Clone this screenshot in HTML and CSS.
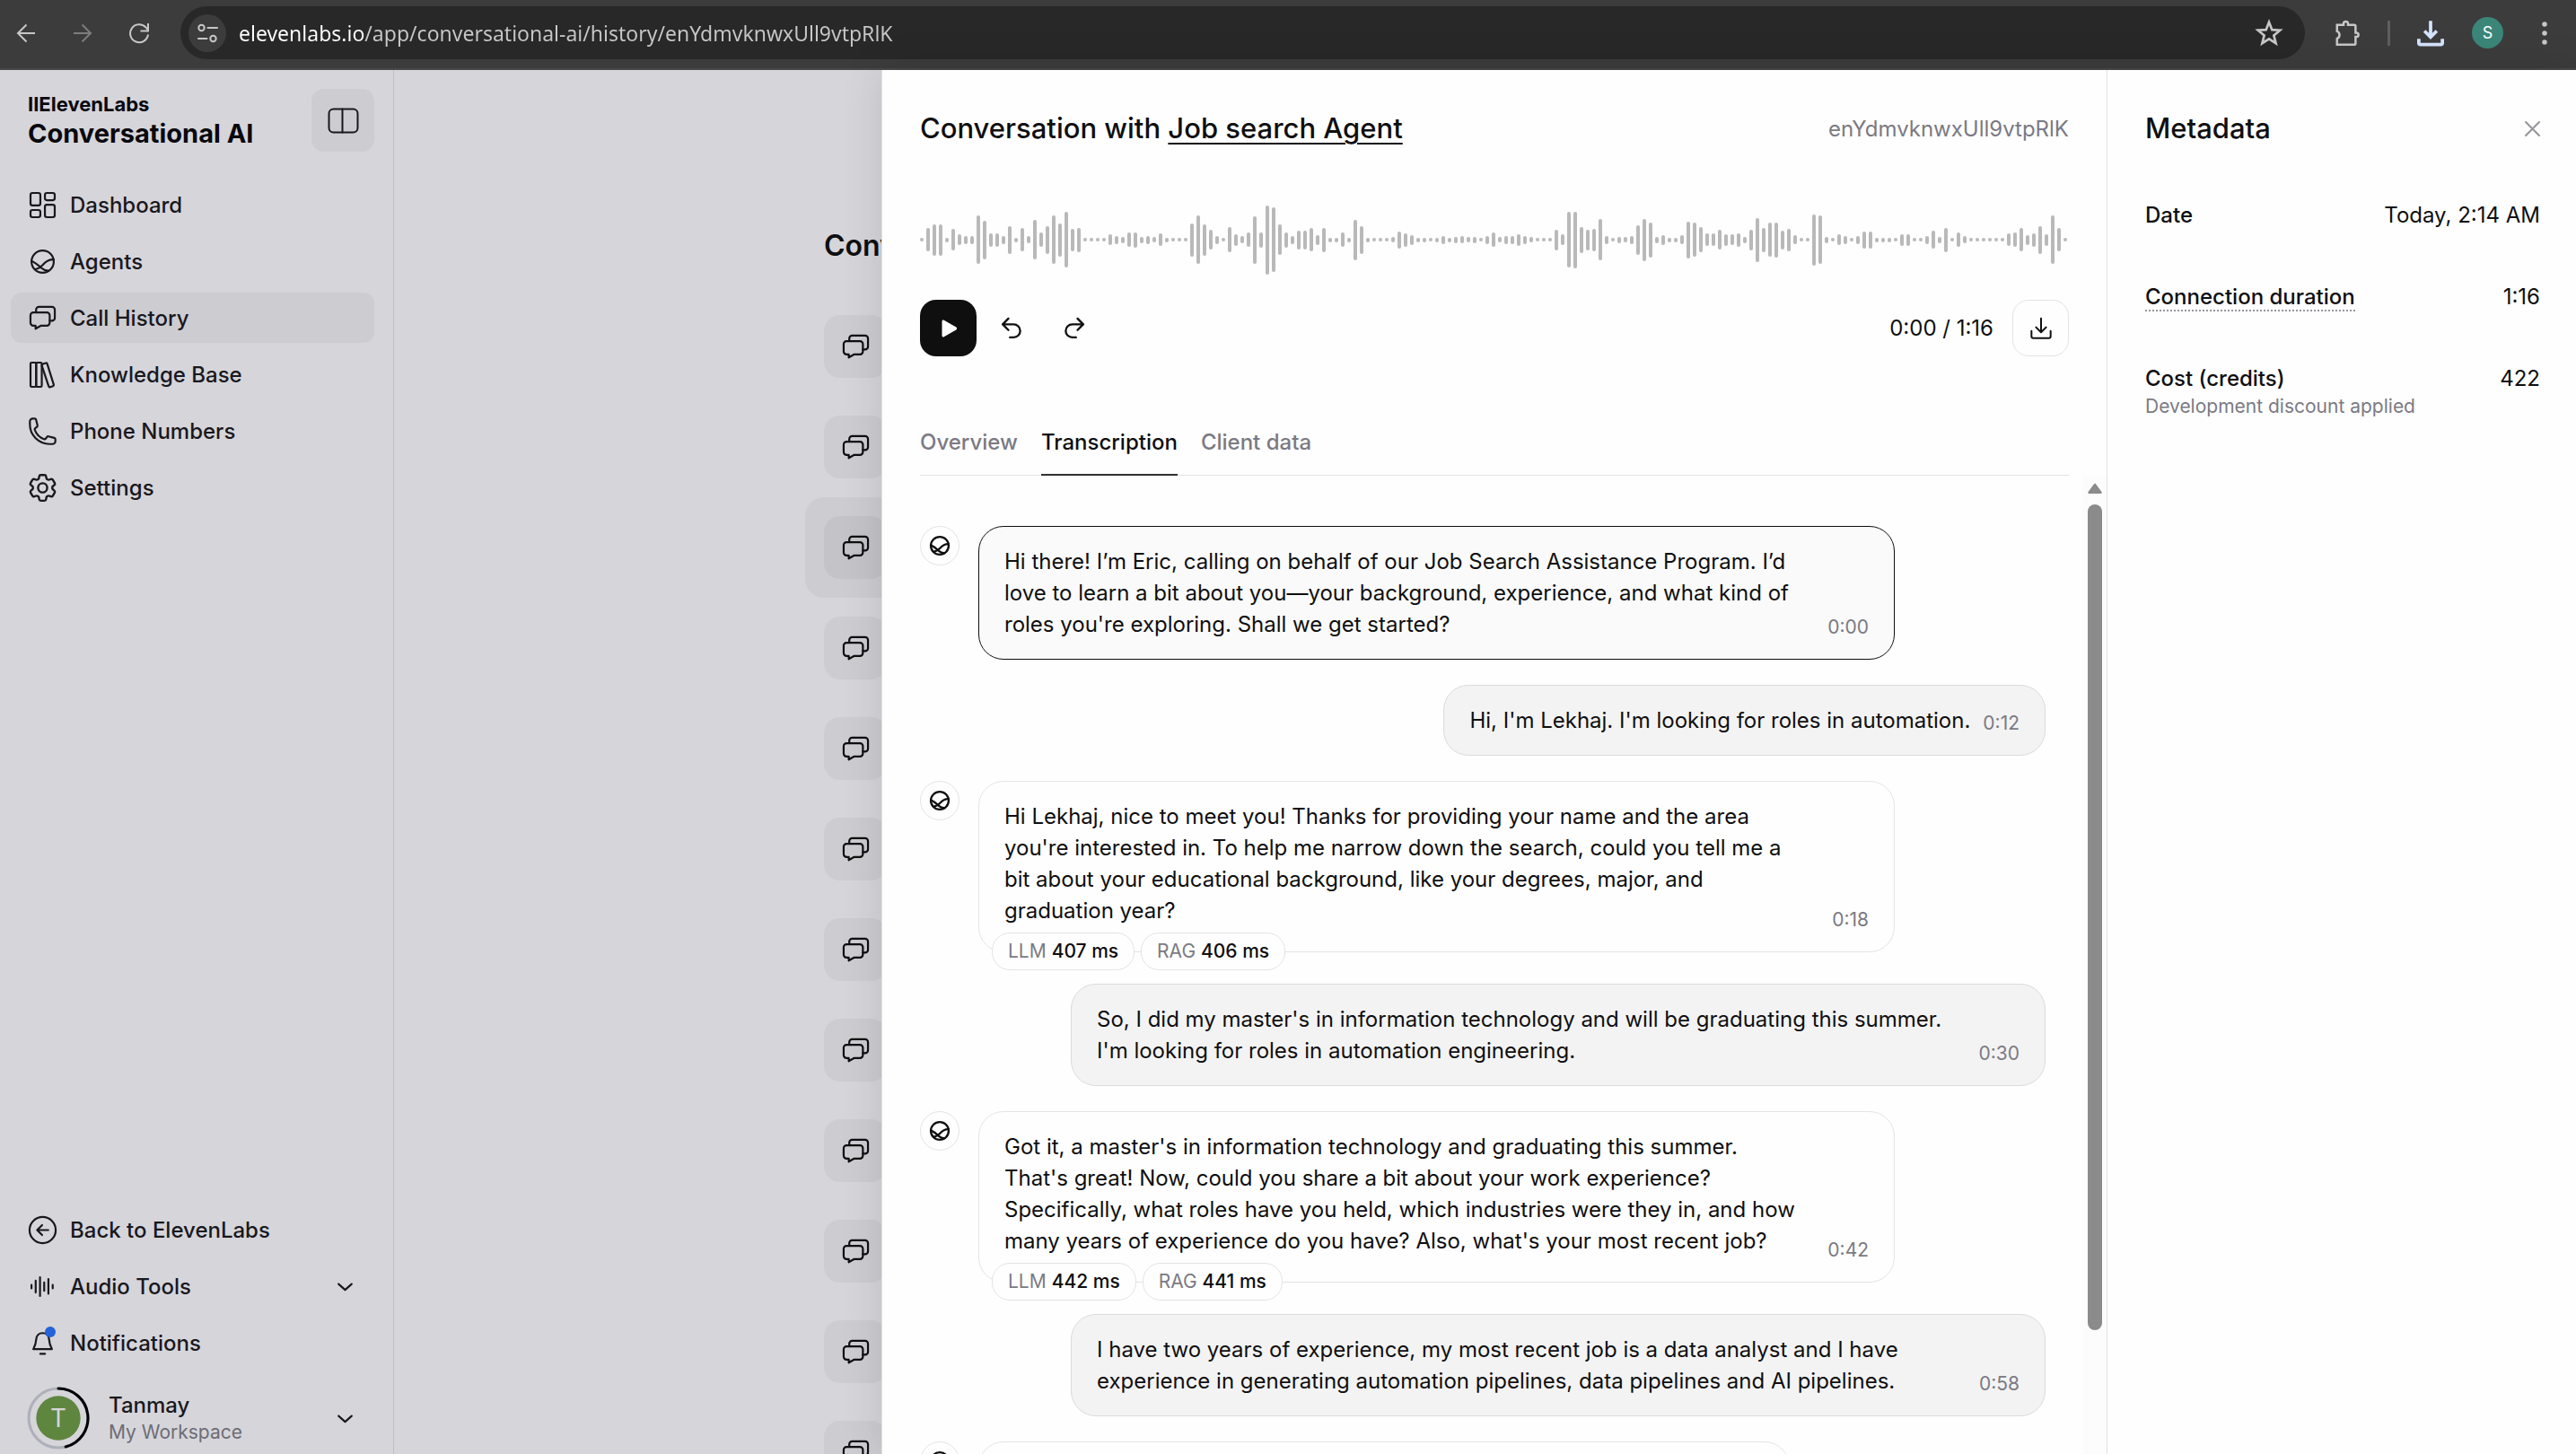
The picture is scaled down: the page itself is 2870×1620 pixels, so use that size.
FILE: index.html
```html
<!DOCTYPE html>
<html lang="en">
<head>
  <meta charset="UTF-8" />
  <meta name="viewport" content="width=device-width, initial-scale=1.0" />
  <title>Conversational AI - Call History</title>
  <link rel="stylesheet" href="styles.css">
</head>
<body>

  <!-- Icon set -->
  <svg class="icon-defs" aria-hidden="true">
    <symbol id="i-dashboard" viewBox="0 0 24 24">
      <rect x="2.75" y="2.75" width="7.5" height="9.5" rx="1.5" />
      <rect x="13.75" y="2.75" width="7.5" height="5.5" rx="1.5" />
      <rect x="2.75" y="15.75" width="7.5" height="5.5" rx="1.5" />
      <rect x="13.75" y="11.75" width="7.5" height="9.5" rx="1.5" />
    </symbol>
    <symbol id="i-agent" viewBox="0 0 24 24">
      <circle cx="12" cy="12" r="8.500" />
      <path d="M3.700 11.700C6 12.600 8.800 14.800 11.200 17c1.600 1.500 3.200 2 5.300 1.900" />
      <path d="M6.500 17.800c2.500-.4 4.300-1.800 6-3.700 2.200-2.500 4.400-3.800 7.900-3.700" />
    </symbol>
    <symbol id="i-chat" viewBox="0 0 24 24">
      <path d="M4.900 7.600h10.300a2.200 2.200 0 0 1 2.200 2.200v5.700a2.200 2.200 0 0 1-2.200 2.200h-4.400l-4.200 2.400v-2.400H4.900a2.200 2.200 0 0 1-2.200-2.200V9.800a2.200 2.200 0 0 1 2.200-2.200Z" />
      <path d="M7 7.600V5.500a2.200 2.200 0 0 1 2.200-2.200h9.900a2.200 2.200 0 0 1 2.200 2.200v6.300a2.200 2.200 0 0 1-2.200 2.200h-1.700" />
    </symbol>
    <symbol id="i-books" viewBox="0 0 24 24">
      <rect x="2.75" y="2.75" width="4.300" height="18.500" rx=".9" />
      <rect x="7.050" y="2.750" width="4.300" height="18.500" rx=".9" />
      <path d="M12 3.900l2.300-.8a.9.9 0 0 1 1.200.6l5 15.900a.9.9 0 0 1-.6 1.100l-2.100.7a.9.9 0 0 1-1.200-.6L11.400 5a.9.900 0 0 1 .6-1.100Z" />
    </symbol>
    <symbol id="i-phone" viewBox="0 0 24 24">
      <path d="M2.250 6.750c0 8.284 6.716 15 15 15h2.250a2.250 2.250 0 0 0 2.250-2.250v-1.372c0-.516-.351-.966-.852-1.091l-4.423-1.106c-.44-.11-.902.055-1.173.417l-.97 1.293c-.282.376-.769.542-1.210.38a12.035 12.035 0 0 1-7.143-7.143c-.162-.441.004-.928.38-1.210l1.293-.97c.363-.271.527-.734.417-1.173L6.963 3.102a1.125 1.125 0 0 0-1.091-.852H4.500A2.250 2.250 0 0 0 2.250 4.500v2.250Z" />
    </symbol>
    <symbol id="i-gear" viewBox="1 1 22 22">
      <path d="M9.594 3.940c.09-.542.56-.94 1.110-.94h2.593c.55 0 1.020.398 1.110.94l.213 1.281c.063.374.313.686.645.87.074.04.147.083.22.127.325.196.72.257 1.075.124l1.217-.456a1.125 1.125 0 0 1 1.370.49l1.296 2.247a1.125 1.125 0 0 1-.26 1.431l-1.003.827c-.293.241-.438.613-.43.992a7.723 7.723 0 0 1 0 .255c-.008.378.137.75.43.991l1.004.827c.424.35.534.955.26 1.430l-1.298 2.247a1.125 1.125 0 0 1-1.369.491l-1.217-.456c-.355-.133-.75-.072-1.076.124a6.470 6.470 0 0 1-.22.128c-.331.183-.581.495-.644.869l-.213 1.281c-.09.543-.56.94-1.110.94h-2.594c-.55 0-1.019-.398-1.110-.94l-.213-1.281c-.062-.374-.312-.686-.644-.87a6.520 6.520 0 0 1-.22-.127c-.325-.196-.72-.257-1.076-.124l-1.217.456a1.125 1.125 0 0 1-1.369-.49l-1.297-2.247a1.125 1.125 0 0 1 .26-1.431l1.004-.827c.292-.24.437-.613.43-.991a6.932 6.932 0 0 1 0-.255c.007-.38-.138-.751-.43-.992l-1.004-.827a1.125 1.125 0 0 1-.26-1.430l1.297-2.247a1.125 1.125 0 0 1 1.370-.491l1.216.456c.356.133.751.072 1.076-.124.072-.044.146-.086.22-.128.332-.183.582-.495.644-.869l.214-1.280Z" />
      <circle cx="12" cy="12" r="3.200" />
    </symbol>
    <symbol id="i-back" viewBox="0 0 24 24">
      <circle cx="12" cy="12" r="10" />
      <path d="M16.300 12H7.800M11.600 8.200L7.800 12l3.800 3.800" />
    </symbol>
    <symbol id="i-audio" viewBox="0 0 24 24">
      <path d="M3.500 10.700v2.600M6.700 7.500v9M10 4.800v14.400M13.200 8.800v6.400M16.400 6.200v11.200M19.700 10.700v2.600" />
    </symbol>
    <symbol id="i-bell" viewBox="0 0 24 24">
      <path d="M12 4.300c-3 0-4.700 2.200-4.900 4.700-.2 3.300-.6 4.600-2.200 7.600h14.200c-1.600-3-2-4.300-2.200-7.600-.2-2.500-1.900-4.700-4.900-4.700ZM10.200 20.200h3.600" />
    </symbol>
    <symbol id="i-chevron" viewBox="0 0 24 24">
      <path d="M7 10l5 4.500 5-4.500" />
    </symbol>
    <symbol id="i-download" viewBox="0 0 24 24">
      <path d="M12 3.500v11.500M7.800 11l4.200 4.200 4.200-4.200M4 14v4.500a1.500 1.500 0 0 0 1.500 1.500h13a1.500 1.500 0 0 0 1.500-1.500V14" />
    </symbol>
  </svg>

  <!-- Browser bar -->
  <header class="browser-bar">
    <button class="bar-btn" aria-label="Back">
      <svg viewBox="0 0 24 24"><path d="M22 12H3.500M12.500 2.500L3 12l9.500 9.500" /></svg>
    </button>
    <button class="bar-btn dim" aria-label="Forward">
      <svg viewBox="0 0 24 24"><path d="M2 12h18.500M11.500 2.500L21 12l-9.500 9.500" /></svg>
    </button>
    <button class="bar-btn" aria-label="Reload">
      <svg viewBox="0 0 24 24"><path d="M22 13.500A10 10 0 1 1 19.500 5.500L21.500 8M22 1v8.500h-8.500" /></svg>
    </button>
    <div class="address">
      <button class="site-info" aria-label="Site information">
        <svg viewBox="0 0 24 24"><circle cx="5.500" cy="6" r="3.200" /><path d="M12.500 6H23M2 18h9.500" /><circle cx="18.500" cy="18" r="3.200" /></svg>
      </button>
      <input class="url" type="text" aria-label="Address" value="elevenlabs.io/app/conversational-ai/history/enYdmvknwxUll9vtpRlK" />
      <button class="star" aria-label="Bookmark">
        <svg viewBox="0 0 24 24"><path d="M12 2.800l2.500 6.300 6.700.4-5.200 4.300 1.700 6.600-5.700-3.700-5.700 3.700L8 13.800 2.800 9.500l6.700-.4Z" /></svg>
      </button>
    </div>
    <div class="bar-tools">
      <button class="bar-btn" aria-label="Extensions">
        <svg viewBox="0 0 24 24"><path d="M3 4.500h5.800v-1a2 2 0 0 1 4 0v1h5.700a1 1 0 0 1 1 1v6h.8a1.800 1.800 0 0 1 0 3.600h-.8v6a1 1 0 0 1-1 1H3v-5.300a3.500 3.500 0 0 0 0-6.500Z" /></svg>
      </button>
      <span class="bar-divider"></span>
      <button class="bar-btn downloads" aria-label="Downloads">
        <svg viewBox="0 0 24 24"><path d="M12 1v14.500M6.500 10l5.500 5.500 5.500-5.500M1.500 17v3.500a1.500 1.500 0 0 0 1.500 1.500h18a1.500 1.500 0 0 0 1.500-1.500V17" /></svg>
      </button>
      <button class="profile" aria-label="Profile">S</button>
      <button class="bar-btn menu" aria-label="Menu">
        <svg viewBox="0 0 24 24"><circle cx="12" cy="4" r="2.200" /><circle cx="12" cy="12" r="2.200" /><circle cx="12" cy="20" r="2.200" /></svg>
      </button>
    </div>
  </header>

  <div class="app">

    <!-- Sidebar -->
    <aside class="sidebar">
      <div class="brand-row">
        <div class="brand">
          <span class="brand-small">IIElevenLabs</span>
          <span class="brand-large">Conversational AI</span>
        </div>
        <button class="toggle" aria-label="Toggle sidebar">
          <svg viewBox="0 0 35 29"><rect x="1.500" y="1.500" width="32" height="26" rx="5" /><path d="M16.500 1.500v26" /></svg>
        </button>
      </div>
      <nav class="nav">
        <a href="#" class="nav-item"><svg class="icon"><use href="#i-dashboard" /></svg>Dashboard</a>
        <a href="#" class="nav-item"><svg class="icon"><use href="#i-agent" /></svg>Agents</a>
        <a href="#" class="nav-item active"><svg class="icon"><use href="#i-chat" /></svg>Call History</a>
        <a href="#" class="nav-item"><svg class="icon"><use href="#i-books" /></svg>Knowledge Base</a>
        <a href="#" class="nav-item"><svg class="icon"><use href="#i-phone" /></svg>Phone Numbers</a>
        <a href="#" class="nav-item"><svg class="icon"><use href="#i-gear" /></svg>Settings</a>
      </nav>
      <div class="nav nav-bottom">
        <a href="#" class="nav-item"><svg class="icon"><use href="#i-back" /></svg>Back to ElevenLabs</a>
        <button class="nav-item"><svg class="icon"><use href="#i-audio" /></svg>Audio Tools<svg class="icon chevron"><use href="#i-chevron" /></svg></button>
        <button class="nav-item"><span class="bell"><svg class="icon"><use href="#i-bell" /></svg><span class="dot"></span></span>Notifications</button>
      </div>
      <button class="user">
        <svg class="user-avatar" viewBox="0 0 68 68">
          <circle class="ring" cx="34" cy="34" r="32" />
          <path class="ring-used" d="M34 2a32 32 0 0 1 8 63" />
          <circle class="face" cx="34" cy="34" r="24" />
          <text x="34" y="44" text-anchor="middle">T</text>
        </svg>
        <span class="user-text">
          <span class="user-name">Tanmay</span>
          <span class="user-space">My Workspace</span>
        </span>
        <svg class="icon chevron"><use href="#i-chevron" /></svg>
      </button>
    </aside>

    <!-- Call list behind the panel -->
    <main class="page">
      <div class="history">
        <h1>Conversation history</h1>
        <ul id="callList"></ul>
      </div>
    </main>

    <!-- Conversation panel -->
    <section class="panel">
      <div class="conversation">
        <div class="conv-head">
          <h2>Conversation with <a href="#">Job search Agent</a></h2>
          <span class="conv-id">enYdmvknwxUll9vtpRlK</span>
        </div>
        <div class="wave" id="wave"></div>
        <div class="player">
          <button class="play" aria-label="Play">
            <svg viewBox="0 0 24 24"><path d="M4.500 4v16c0 1.200 1.200 1.900 2.200 1.300l13.600-7.900c1-.6 1-2.200 0-2.800L6.700 2.700C5.700 2.100 4.500 2.800 4.500 4Z" /></svg>
          </button>
          <button class="skip" aria-label="Back 10 seconds">
            <svg viewBox="0 0 24 24"><path d="M9 2.500L3.500 8 9 13.500M3.500 8H14a6 6 0 0 1 0 12.500h-3.500" /></svg>
          </button>
          <button class="skip" aria-label="Forward 10 seconds">
            <svg viewBox="0 0 24 24"><path d="M15 2.500L20.500 8 15 13.500M20.500 8H10a6 6 0 0 0 0 12.500h3.500" /></svg>
          </button>
          <span class="time">0:00 / 1:16</span>
          <button class="download" aria-label="Download audio"><svg><use href="#i-download" /></svg></button>
        </div>
        <div class="tabs">
          <button class="tab">Overview</button>
          <button class="tab selected">Transcription</button>
          <button class="tab">Client data</button>
        </div>
        <div class="transcript">
          <div class="messages">

            <div class="row agent">
              <span class="avatar"><svg><use href="#i-agent" /></svg></span>
              <div class="bubble current">
                <p>Hi there! I’m Eric, calling on behalf of our Job Search Assistance Program. I’d<br>love to learn a bit about you—your background, experience, and what kind of<br>roles you're exploring. Shall we get started?</p>
                <time>0:00</time>
              </div>
            </div>

            <div class="row user-row">
              <div class="bubble">
                <p>Hi, I'm Lekhaj. I'm looking for roles in automation.</p>
                <time>0:12</time>
              </div>
            </div>

            <div class="row agent timed">
              <span class="avatar"><svg><use href="#i-agent" /></svg></span>
              <div class="bubble">
                <p>Hi Lekhaj, nice to meet you! Thanks for providing your name and the area<br>you're interested in. To help me narrow down the search, could you tell me a<br>bit about your educational background, like your degrees, major, and<br>graduation year?</p>
                <time>0:18</time>
                <div class="chips"><span class="chip">LLM <b>407 ms</b></span><span class="chip">RAG <b>406 ms</b></span></div>
              </div>
            </div>

            <div class="row user-row">
              <div class="bubble wide">
                <p>So, I did my master's in information technology and will be graduating this summer.<br>I'm looking for roles in automation engineering.</p>
                <time>0:30</time>
              </div>
            </div>

            <div class="row agent timed">
              <span class="avatar"><svg><use href="#i-agent" /></svg></span>
              <div class="bubble">
                <p>Got it, a master's in information technology and graduating this summer.<br>That's great! Now, could you share a bit about your work experience?<br>Specifically, what roles have you held, which industries were they in, and how<br>many years of experience do you have? Also, what's your most recent job?</p>
                <time>0:42</time>
                <div class="chips"><span class="chip">LLM <b>442 ms</b></span><span class="chip">RAG <b>441 ms</b></span></div>
              </div>
            </div>

            <div class="row user-row">
              <div class="bubble wide">
                <p>I have two years of experience, my most recent job is a data analyst and I have<br>experience in generating automation pipelines, data pipelines and AI pipelines.</p>
                <time>0:58</time>
              </div>
            </div>

            <div class="row agent">
              <span class="avatar"><svg><use href="#i-agent" /></svg></span>
              <div class="bubble next"></div>
            </div>

          </div>
          <div class="scrollbar">
            <svg class="arrow" viewBox="0 0 16 12"><path d="M7 1.200Q8-.4 9 1.200L15.500 10Q16 12 14.500 12H1.500Q0 12 .5 10Z" /></svg>
            <span class="thumb"></span>
          </div>
        </div>
      </div>

      <!-- Metadata -->
      <aside class="metadata">
        <div class="meta-head">
          <h2>Metadata</h2>
          <button class="close" aria-label="Close">
            <svg viewBox="0 0 16 16"><path d="M1 1l14 14M15 1L1 15" /></svg>
          </button>
        </div>
        <dl>
          <div class="meta-row"><dt>Date</dt><dd>Today, 2:14 AM</dd></div>
          <div class="meta-row"><dt><span class="hint">Connection duration</span></dt><dd>1:16</dd></div>
          <div class="meta-row"><dt>Cost (credits)<small>Development discount applied</small></dt><dd>422</dd></div>
        </dl>
      </aside>
    </section>
  </div>

  <script src="script.js"></script>
</body>
</html>
```
FILE: styles.css
```css
* {
  box-sizing: border-box;
}

body {
  margin: 0;
  height: 100vh;
  display: flex;
  flex-direction: column;
  overflow: hidden;
  font-family: Inter, "Liberation Sans", sans-serif;
  font-size: 24px;
  line-height: 35px;
  color: #0f0f10;
  background: #d6d5da;
}

h1, h2, p, ul, dl, dd {
  margin: 0;
  padding: 0;
}

button {
  font: inherit;
  color: inherit;
  background: none;
  border: none;
  padding: 0;
  display: flex;
  align-items: center;
  justify-content: center;
  cursor: pointer;
}

a {
  color: inherit;
}

svg {
  fill: none;
  stroke: currentColor;
  stroke-width: 1.5;
  stroke-linecap: round;
  stroke-linejoin: round;
  flex: none;
}

.icon-defs {
  display: none;
}

.icon {
  width: 35px;
  height: 35px;
}

/* Browser bar */
.browser-bar {
  flex: none;
  height: 78px;
  padding: 0 20px 3px 12px;
  display: flex;
  align-items: center;
  background: #3c3c3c;
  border-bottom: 2px solid #474747;
  color: #c7c7c7;
}

.bar-btn {
  width: 34px;
  height: 42px;
  margin-right: 29px;
}

.bar-btn svg {
  width: 24px;
  height: 24px;
  stroke-width: 2;
  stroke-linecap: butt;
  stroke-linejoin: miter;
}

.bar-btn.dim {
  color: #7c7c7c;
}

.address {
  flex: 1;
  height: 59px;
  padding: 0 24px 0 9px;
  display: flex;
  align-items: center;
  border-radius: 30px;
  background: #282828;
}

.site-info {
  width: 42px;
  height: 42px;
  border-radius: 50%;
  background: #3c3c3c;
}

.site-info svg {
  width: 24px;
  height: 24px;
  stroke-width: 2;
}

.url {
  flex: 1;
  height: 42px;
  margin-left: 14px;
  padding: 0;
  border: none;
  outline: none;
  font-family: "Noto Sans", "Open Sans", sans-serif;
  font-size: 23px;
  color: transparent;
  background: linear-gradient(90deg, #ffffff 140px, #c7c7c7 140px);
  -webkit-background-clip: text;
  background-clip: text;
}

.star svg {
  width: 32px;
  height: 32px;
  stroke-width: 2;
  stroke-linejoin: miter;
}

.bar-tools {
  display: flex;
  align-items: center;
  margin-left: 32px;
}

.bar-tools .bar-btn {
  width: 30px;
  margin: 0;
}

.bar-tools .bar-btn svg {
  width: 30px;
  height: 30px;
}

.bar-divider {
  width: 3px;
  height: 28px;
  margin: 0 30px;
  background: #5f5f5f;
}

.downloads {
  color: #d3e3fd;
}

.bar-tools .downloads svg {
  stroke-width: 3;
}

.profile {
  width: 35px;
  height: 35px;
  margin: 0 31px;
  border-radius: 50%;
  background: #3b8678;
  color: #fff;
  font-size: 18px;
}

.menu svg {
  fill: #c7c7c7;
  stroke: none;
}

/* App */
.app {
  flex: 1;
  min-height: 0;
  display: flex;
  position: relative;
}

.sidebar {
  width: 439px;
  flex: none;
  padding: 21px 21px 0 12px;
  display: flex;
  flex-direction: column;
  border-right: 1px solid #bfbec3;
  color: #19181d;
}

.brand-row {
  display: flex;
  justify-content: space-between;
  align-items: center;
  padding-left: 19px;
}

.brand {
  display: flex;
  flex-direction: column;
  color: #09080d;
}

.brand-small {
  font-size: 22px;
  font-weight: 700;
  line-height: 30px;
}

.brand-large {
  font-size: 29px;
  font-weight: 700;
  line-height: 36px;
}

.toggle {
  width: 70px;
  height: 70px;
  border-radius: 14px;
  background: #cdccd1;
}

.toggle svg {
  width: 35px;
  height: 29px;
  stroke-width: 2;
}

.nav {
  display: flex;
  flex-direction: column;
  gap: 7px;
  margin-top: 31px;
}

.nav-item {
  display: flex;
  justify-content: flex-start;
  align-items: center;
  gap: 13px;
  height: 56px;
  padding: 0 18px;
  border-radius: 12px;
  font-weight: 500;
  text-decoration: none;
}

.nav-item.active {
  background: #cdccd1;
}

.nav-bottom {
  margin-top: auto;
}

.chevron {
  margin-left: auto;
}

.nav-item .chevron {
  margin-right: -3px;
}

.bell {
  position: relative;
  display: flex;
}

.dot {
  position: absolute;
  top: -1px;
  right: 3px;
  width: 12px;
  height: 12px;
  border-radius: 50%;
  background: #2563d8;
}

.user {
  justify-content: flex-start;
  gap: 21px;
  margin: 21px 0 5px;
  padding: 0 15px 0 18px;
}

.user-avatar {
  width: 70px;
  height: 70px;
}

.user-avatar circle,
.user-avatar text {
  stroke: none;
}

.user-avatar .ring {
  stroke: #aeb0ba;
  stroke-width: 3;
}

.user-avatar .ring-used {
  stroke: #000;
  stroke-width: 3;
}

.user-avatar .face {
  fill: #5f863f;
}

.user-avatar text {
  fill: #d6d5da;
  font-size: 27px;
}

.user-text {
  display: flex;
  flex-direction: column;
  text-align: left;
}

.user-name {
  font-weight: 500;
  line-height: 32px;
}

.user-space {
  font-size: 21px;
  line-height: 28px;
  color: #6d6c75;
}

.page {
  flex: 1;
  display: flex;
  justify-content: center;
  overflow: hidden;
}

.history {
  width: 1515px;
  padding-top: 175px;
}

.history h1 {
  padding-left: 21px;
  font-size: 32px;
  line-height: 42px;
  font-weight: 600;
  margin-bottom: 35px;
}

.history ul {
  list-style: none;
}

.call {
  display: flex;
  padding: 21px;
  border-radius: 21px;
}

.call-icon {
  width: 70px;
  height: 70px;
  display: flex;
  align-items: center;
  justify-content: center;
  border-radius: 18px;
  background: #cdccd1;
}

.call.active {
  background: #cdccd1;
}

.call.active .call-icon {
  background: #c4c3c8;
}

/* Panel */
.panel {
  position: absolute;
  top: 0;
  bottom: 0;
  left: 982px;
  right: 0;
  display: flex;
  border-left: 1px solid #e2e2e4;
  background: #fefefe;
  box-shadow: 0 0 44px rgba(0, 0, 0, 0.12);
}

.conversation {
  flex: 1;
  display: flex;
  flex-direction: column;
  min-width: 0;
  padding: 43px 0 0 42px;
}

.conv-head,
.wave,
.player,
.tabs {
  flex: none;
  margin-right: 42px;
}

.conv-head {
  display: flex;
  justify-content: space-between;
  align-items: center;
  height: 44px;
}

h2 {
  font-size: 31px;
  line-height: 44px;
  font-weight: 500;
}

h2 a {
  text-decoration-thickness: 2px;
  text-underline-offset: 5px;
}

.conv-id {
  color: #7b7a83;
}

.wave {
  display: flex;
  justify-content: space-between;
  align-items: center;
  height: 84px;
  margin-top: 60px;
}

.wave span {
  width: 4px;
  border-radius: 2px;
  background: #b9b9b9;
}

.player {
  display: flex;
  align-items: center;
  height: 63px;
  margin-top: 25px;
}

.play,
.download {
  width: 63px;
  height: 63px;
  border-radius: 18px;
}

.play {
  background: #0f0f10;
  color: #fff;
  margin-right: 7px;
}

.play svg {
  width: 26px;
  height: 24px;
  fill: #fff;
  stroke: none;
}

.skip {
  width: 63px;
  height: 63px;
  margin-right: 7px;
}

.skip svg {
  width: 28px;
  height: 28px;
  stroke-width: 2;
}

.time {
  margin-left: auto;
  margin-right: 21px;
}

.download {
  border: 1px solid #e3e3e5;
}

.download svg {
  width: 32px;
  height: 32px;
}

.tabs {
  display: flex;
  gap: 26px;
  margin-top: 77px;
  border-bottom: 1px solid #e1e1e3;
}

.tab {
  height: 56px;
  padding-bottom: 18px;
  margin-bottom: -1px;
  border-bottom: 2px solid transparent;
  color: #7b7a83;
  font-weight: 500;
}

.tab.selected {
  color: #0f0f10;
  border-color: #303030;
}

.transcript {
  flex: 1;
  min-height: 0;
  display: flex;
}

.messages {
  flex: 1;
  min-width: 0;
  padding: 56px 41px 0 0;
  display: flex;
  flex-direction: column;
  gap: 28px;
  overflow: hidden;
}

.row {
  display: flex;
  flex: none;
  align-items: flex-start;
}

.row.agent {
  margin-right: 168px;
  gap: 21px;
}

.row.timed {
  margin-bottom: 7px;
}

.row.user-row {
  justify-content: flex-end;
  margin-left: 168px;
}

.avatar {
  width: 44px;
  height: 44px;
  flex: none;
  display: flex;
  align-items: center;
  justify-content: center;
  border: 1px solid #e4e4e6;
  border-radius: 50%;
}

.avatar svg {
  width: 28px;
  height: 28px;
  stroke-width: 2;
}

.bubble {
  position: relative;
  display: flex;
  justify-content: space-between;
  gap: 14px;
  padding: 21px 28px;
  border: 1px solid #e4e4e6;
  border-radius: 28px;
}

.agent .bubble {
  flex: 1;
}

.user-row .bubble {
  border-color: #dbdbde;
  background: #f3f3f3;
}

.bubble.wide {
  flex: 1;
}

.bubble.current {
  border-color: #0f0f10;
  background: #fafafa;
}

.agent .bubble.next {
  flex: none;
  width: 904px;
  height: 114px;
}

.timed .bubble p {
  margin-bottom: 7px;
}

.bubble p {
  white-space: nowrap;
}

.bubble time {
  align-self: flex-end;
  font-size: 21px;
  line-height: 28px;
  color: #7b7a83;
}

.chips {
  position: absolute;
  left: 14px;
  bottom: -21px;
  display: flex;
  gap: 7px;
}

.chip {
  height: 42px;
  padding: 0 17px;
  border: 1px solid #e4e4e6;
  border-radius: 20px;
  background: #fefefe;
  font-size: 21px;
  line-height: 40px;
  color: #7b7a83;
}

.chip b {
  font-weight: 500;
  color: #0f0f10;
}

.scrollbar {
  width: 27px;
  flex: none;
  padding: 8px 5px 0 6px;
  background: #fcfcfc;
}

.arrow {
  display: block;
  width: 16px;
  height: 12px;
  margin-bottom: 12px;
  fill: #8b8b8b;
  stroke: none;
}

.thumb {
  display: block;
  height: 85%;
  width: 16px;
  border-radius: 8px;
  background: #8b8b8b;
}

/* Metadata */
.metadata {
  width: 523px;
  flex: none;
  padding: 43px 40px 0 42px;
  border-left: 1px solid #e2e2e4;
}

.meta-head {
  display: flex;
  justify-content: space-between;
  align-items: center;
  margin-bottom: 57px;
}

.close {
  color: #97969e;
}

.close svg {
  width: 17px;
  height: 17px;
  stroke-width: 2;
}

.meta-row {
  display: flex;
  justify-content: space-between;
  margin-bottom: 56px;
}

.meta-row dt {
  font-weight: 500;
}

.hint {
  border-bottom: 2px dotted #97969e;
}

.meta-row small {
  display: block;
  font-size: 21px;
  line-height: 28px;
  font-weight: 400;
  color: #7b7a83;
}
```
FILE: script.js
```js
// Peak height of each bar in the recording
const peaks = [
  4, 26, 35, 35, 5, 24, 12, 9, 9, 54, 43, 15, 15, 9, 31, 5, 26, 8, 44, 16,
  31, 54, 37, 62, 25, 27, 4, 4, 4, 4, 12, 9, 7, 16, 17, 7, 9, 6, 14, 5,
  4, 4, 4, 37, 54, 35, 22, 9, 4, 28, 13, 8, 16, 53, 17, 77, 72, 34, 17, 9,
  21, 21, 26, 11, 27, 5, 5, 16, 5, 45, 31, 5, 4, 4, 4, 6, 19, 15, 11, 5,
  5, 4, 5, 9, 5, 7, 8, 6, 7, 4, 9, 16, 6, 9, 9, 13, 9, 6, 4, 4,
  4, 23, 12, 62, 63, 29, 23, 25, 46, 9, 4, 7, 6, 9, 33, 47, 39, 7, 11, 5,
  5, 10, 41, 38, 28, 14, 14, 22, 13, 12, 15, 7, 23, 49, 27, 38, 39, 21, 25, 10,
  4, 4, 57, 54, 7, 4, 12, 9, 4, 9, 19, 19, 5, 5, 5, 4, 13, 13, 4, 4,
  9, 20, 7, 27, 4, 16, 8, 4, 4, 4, 4, 4, 4, 14, 16, 26, 11, 15, 31, 13,
  54, 26, 4
];

document.getElementById("wave").innerHTML = peaks
  .map(h => `<span style="height:${h}px"></span>`)
  .join("");

// Rows of the call list, the third one is open
let calls = "";
for (let i = 0; i < 12; i++) {
  calls += `<li class="call ${i === 2 ? "active" : ""}">
    <span class="call-icon"><svg class="icon"><use href="#i-chat" /></svg></span>
  </li>`;
}
document.getElementById("callList").innerHTML = calls;
```
